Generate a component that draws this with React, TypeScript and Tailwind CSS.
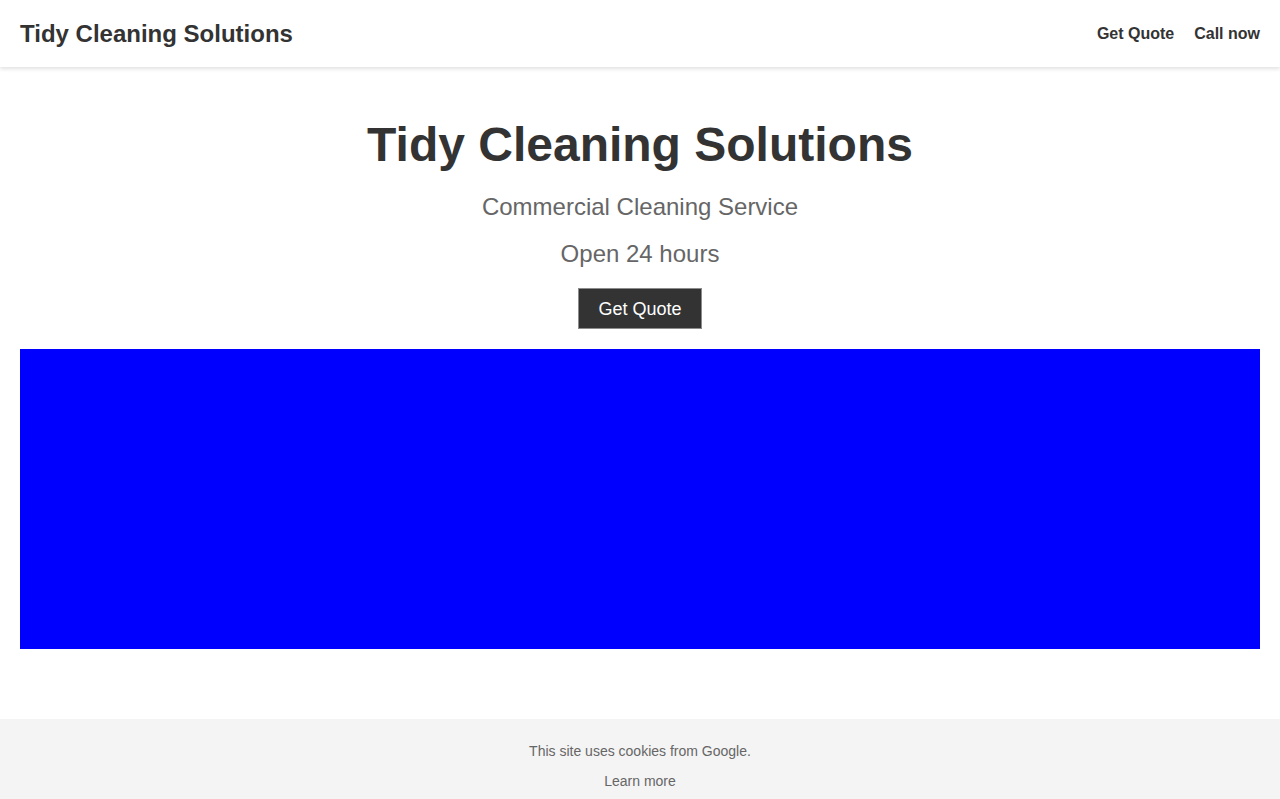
import React from "react";

export default function App() {
  return (
    <div className="min-h-[799px] bg-white text-[#333] flex flex-col" style={{ fontFamily: '"Liberation Sans", Arial, sans-serif' }}>
      <header className="h-[67px] flex items-center justify-between px-5 bg-white shadow-[0_2px_4px_rgba(0,0,0,0.12)] relative z-10">
        <div className="text-[24px] font-bold leading-[28px]">Tidy Cleaning Solutions</div>
        <nav className="flex gap-5 text-[16px] font-bold leading-[20px]">
          <a href="#" className="text-[#333]">Get Quote</a>
          <a href="#" className="text-[#333]">Call now</a>
        </nav>
      </header>
      <main className="flex flex-col items-center px-5 pt-[50px]">
        <h1 className="text-[48px] font-bold leading-[55px] text-center">Tidy Cleaning Solutions</h1>
        <p className="mt-[21px] text-[24px] leading-[28px] text-[#666]">Commercial Cleaning Service</p>
        <p className="mt-[19px] text-[24px] leading-[28px] text-[#666]">Open 24 hours</p>
        <button className="mt-[20px] h-[41px] px-[19px] bg-[#333] border border-[#8c8c8c] text-white text-[18px] leading-[20px]">Get Quote</button>
        <div className="mt-[20px] w-full h-[300px] bg-[#0000ff]" />
      </main>
      <footer className="mt-[70px] h-[80px] bg-[#f4f4f4] flex flex-col items-center pt-[22px] text-[14px] leading-[20px] text-[#666]">
        <p>This site uses cookies from Google.</p>
        <a href="#" className="mt-[10px] text-[#666]">Learn more</a>
      </footer>
    </div>
  );
}
